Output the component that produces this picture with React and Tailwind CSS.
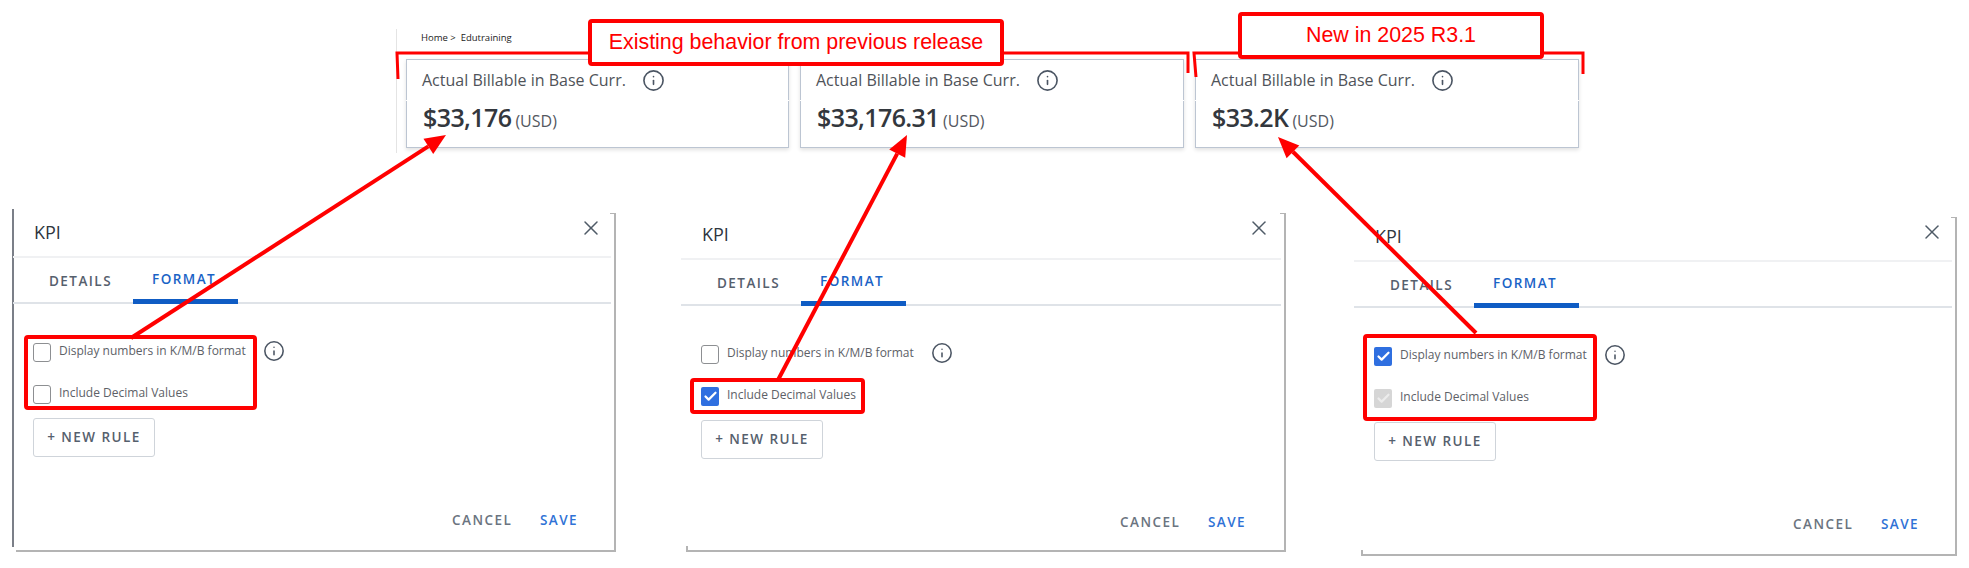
import React from 'react'
import { Check, Info, X } from 'lucide-react'

const openSans = "font-['Open_Sans',sans-serif]"

const KpiCard = ({ value, width }) => {
  return (
    <div className={`relative h-[89px] ${width} shrink-0 border border-[#bcc5d2] bg-white shadow-[0_2px_4px_rgba(0,0,0,0.12)] pl-[15px]`}>
      <div className="absolute -left-px top-[40px] h-px w-px bg-white"></div>
      <div className="absolute -right-px top-[40px] h-px w-px bg-white"></div>
      <div className="flex items-center h-[20px] mt-[10px]">
        <span className="text-[16px] font-medium text-[#4f5359] leading-[20px] w-[220px] whitespace-nowrap">Actual Billable in Base Curr.</span>
        <Info size={23} strokeWidth={1.7} className="text-[#4b5563]" />
      </div>
      <div className="flex items-baseline mt-[9px] ml-px">
        <span className="text-[25px] font-semibold text-[#33373d] leading-[36px] tracking-[-0.6px]">{value}</span>
        <span className="text-[16px] text-[#54585f] ml-[4px]">(USD)</span>
      </div>
    </div>
  )
}

const Box = ({ state }) => {
  if (state === 'on') {
    return (
      <div className="flex items-center justify-center w-[18px] h-[19px] shrink-0 rounded-[2px] bg-[#2f6fe0]">
        <Check size={15} strokeWidth={3.6} className="text-white" />
      </div>
    )
  }
  if (state === 'disabled') {
    return (
      <div className="flex items-center justify-center w-[18px] h-[19px] shrink-0 rounded-[2px] bg-[#d6d6d6]">
        <Check size={15} strokeWidth={3.6} className="text-[#ececec]" />
      </div>
    )
  }
  return <div className="w-[18px] h-[19px] shrink-0 rounded-[3px] border border-[#8d8f92] bg-white"></div>
}

const KpiDialog = ({ width, headerHeight, ruleWidth, first, boxOne, boxTwo, cornerLeft, redBox, marginLeft, marginTop }) => {
  return (
    <div className={`relative ${width} ${marginLeft} ${marginTop} h-[339px] shrink-0 border-r-2 border-[#b4b4b4] bg-white`}>
      {first && <div className="absolute -left-px -top-[4px] h-[338px] w-[2px] bg-[#7b7f88]"></div>}
      <div className={`absolute bottom-0 right-0 ${cornerLeft} h-[6px] border-b-2 border-[#b4b4b4] ${first ? '' : 'border-l-2'}`}></div>
      <div className={`absolute top-0 right-0 w-[4px] h-px bg-[#b4b4b4]`}></div>

      <div className={`relative ${ruleWidth} ${headerHeight} border-b-2 border-[#f0f1f3]`}>
        <span className="absolute left-[21px] bottom-[12px] text-[18px] leading-[24px] text-[#2f3640]">KPI</span>
        <X size={24} strokeWidth={1.5} className="absolute left-[566px] top-[3px] text-[#4f5b67]" />
      </div>

      <div className={`relative ${ruleWidth} h-[46px] border-b-2 border-[#dfe3e8]`}>
        <span className="absolute left-[36px] top-[13px] text-[13.5px] leading-[20px] font-semibold tracking-[1.45px] text-[#56606d]">DETAILS</span>
        <span className="absolute left-[139px] top-[11px] text-[13.5px] leading-[20px] font-semibold tracking-[1.45px] text-[#1a63c6]">FORMAT</span>
        <div className="absolute left-[120px] -bottom-[2px] w-[105px] h-[5px] bg-[#0f5cc4]"></div>
      </div>

      <div className="flex items-center gap-[8px] ml-[20px] mt-[39px] h-[19px]">
        <Box state={boxOne} />
        <span className="text-[12px] leading-[16px] text-[#5d6167] w-[187px] whitespace-nowrap -mt-[3px]">Display numbers in K/M/B format</span>
        <Info size={22} strokeWidth={1.7} className="text-[#4b5563] ml-[9px] -mt-[3px]" />
      </div>
      <div className="flex items-center gap-[8px] ml-[20px] mt-[23px] h-[19px]">
        <Box state={boxTwo} />
        <span className="text-[12px] leading-[16px] text-[#5d6167] whitespace-nowrap -mt-[3px]">Include Decimal Values</span>
      </div>

      <div className="flex items-center justify-center ml-[20px] mt-[14px] w-[122px] h-[39px] rounded-[3px] border border-[#cfd4da] bg-white text-[13.5px] font-semibold tracking-[1.45px] text-[#56606d]">+ NEW RULE</div>

      <div className="flex ml-[439px] mt-[53px] text-[13.5px] leading-[20px] font-semibold tracking-[1.45px]">
        <span className="w-[88px] text-[#6b7480]">CANCEL</span>
        <span className="text-[#2f72d6]">SAVE</span>
      </div>

      <div className={`absolute ${redBox} border-4 border-[#ff0000] rounded-[4px]`}></div>
    </div>
  )
}

const Arrow = ({ x1, y1, x2, y2 }) => {
  const len = Math.hypot(x2 - x1, y2 - y1)
  const ux = (x2 - x1) / len
  const uy = (y2 - y1) / len
  const bx = x2 - ux * 21
  const by = y2 - uy * 21
  const p1 = `${bx - uy * 9},${by + ux * 9}`
  const p2 = `${bx + uy * 9},${by - ux * 9}`
  return (
    <g>
      <line x1={x1} y1={y1} x2={bx} y2={by} stroke="#ff0000" strokeWidth="4" />
      <polygon points={`${x2},${y2} ${p1} ${p2}`} fill="#ff0000" />
    </g>
  )
}

const App = () => {
  return (
    <div className={`relative w-[1969px] h-[568px] overflow-hidden bg-white pt-[29px] ${openSans}`}>
      <div className="ml-[396px] h-[124px] border-l border-[#e4e4e4] pl-[9px]">
        <div className="h-[18px] mb-[12px] pl-[15px] text-[9.5px] leading-[18px] text-[#222]">Home &gt;&nbsp; Edutraining</div>
        <div className="flex gap-[11px]">
          <KpiCard value="$33,176" width="w-[383px]" />
          <KpiCard value="$33,176.31" width="w-[384px]" />
          <KpiCard value="$33.2K" width="w-[384px]" />
        </div>
      </div>

      <div className="flex items-start">
        <KpiDialog
          first
          width="w-[603px]"
          marginLeft="ml-[13px]"
          marginTop="mt-[60px]"
          headerHeight="h-[45px]"
          ruleWidth="w-[598px]"
          cornerLeft="left-[3px]"
          boxOne="off"
          boxTwo="off"
          redBox="left-[11px] top-[122px] w-[233px] h-[75px]"
        />
        <KpiDialog
          width="w-[605px]"
          marginLeft="ml-[65px]"
          marginTop="mt-[60px]"
          headerHeight="h-[47px]"
          ruleWidth="w-[600px]"
          cornerLeft="left-[5px]"
          boxOne="off"
          boxTwo="on"
          redBox="left-[9px] top-[165px] w-[175px] h-[36px]"
        />
        <KpiDialog
          width="w-[603px]"
          marginLeft="ml-[68px]"
          marginTop="mt-[64px]"
          headerHeight="h-[45px]"
          ruleWidth="w-[598px]"
          cornerLeft="left-[7px]"
          boxOne="on"
          boxTwo="disabled"
          redBox="left-[9px] top-[117px] w-[234px] h-[87px]"
        />
      </div>

      {/* annotations */}
      <svg className="absolute inset-0 pointer-events-none" width="1969" height="568" fill="none">
        <polyline points="398,79 397,53 1188,53 1188,73" stroke="#ff0000" strokeWidth="3" />
        <polyline points="1196,77 1194,53 1583,53 1583,74" stroke="#ff0000" strokeWidth="3" />
        <Arrow x1={131} y1={338} x2={446} y2={135} />
        <Arrow x1={778} y1={380} x2={907} y2={135} />
        <Arrow x1={1476} y1={333} x2={1278} y2={137} />
      </svg>
      <div className="absolute left-[588px] top-[19px] flex items-center justify-center w-[416px] h-[47px] rounded-[4px] border-4 border-[#ff0000] bg-white font-['Liberation_Sans',sans-serif] text-[21.4px] text-[#ff0000]">Existing behavior from previous release</div>
      <div className="absolute left-[1238px] top-[12px] flex items-center justify-center w-[306px] h-[47px] rounded-[4px] border-4 border-[#ff0000] bg-white font-['Liberation_Sans',sans-serif] text-[21.4px] text-[#ff0000]">New in 2025 R3.1</div>
    </div>
  )
}

export default App
